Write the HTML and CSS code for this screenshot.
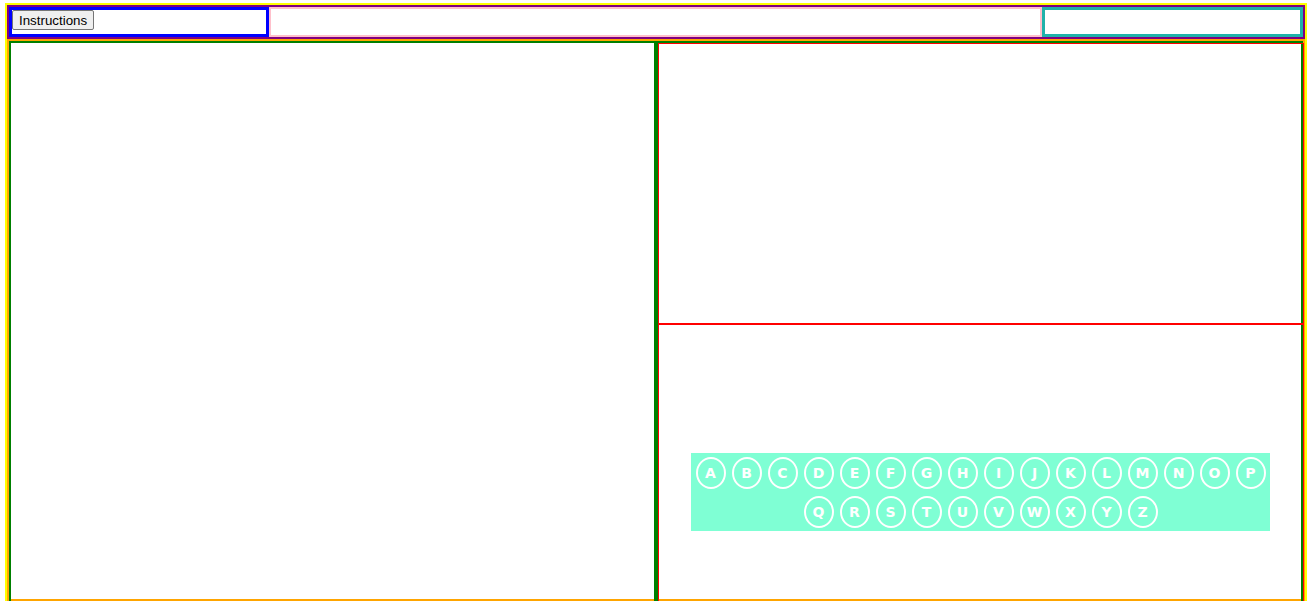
FILE: index.html
```html
<!DOCTYPE html>
<html>
<head>
<meta charset="utf-8">
<title>Keyboard</title>
<link rel="stylesheet" href="styles.css">
</head>
<body>
<div class="app">
  <div class="header">
    <div class="h-left"><button class="btn">Instructions</button></div>
    <div class="h-mid"></div>
    <div class="h-right"></div>
  </div>
  <div class="main">
    <div class="panel panel-left"></div>
    <div class="panel panel-right">
      <div class="sub"></div>
      <div class="sub sub-bottom">
        <div class="keyboard">
          <span class="key">A</span><span class="key">B</span><span class="key">C</span><span class="key">D</span><span class="key">E</span><span class="key">F</span><span class="key">G</span><span class="key">H</span><span class="key">I</span><span class="key">J</span><span class="key">K</span><span class="key">L</span><span class="key">M</span><span class="key">N</span><span class="key">O</span><span class="key">P</span><span class="key">Q</span><span class="key">R</span><span class="key">S</span><span class="key">T</span><span class="key">U</span><span class="key">V</span><span class="key">W</span><span class="key">X</span><span class="key">Y</span><span class="key">Z</span>
        </div>
      </div>
    </div>
  </div>
</div>
</body>
</html>
```

FILE: styles.css
```css
body {
  margin: 3px 0 0 5px;
  font-family: "Liberation Sans", Arial, sans-serif;
}

.app {
  width: 1298px;
  height: 594px;
  border: 2px solid #ffff00;
}

.header {
  display: flex;
  height: 30px;
  border: 2px solid #800080;
}

.h-left {
  width: 254px;
  border: 3px solid #0000ff;
}

.h-mid {
  flex: 1;
  border: 2px solid #ffc0cb;
}

.h-right {
  width: 255px;
  border: 3px solid #20b2aa;
}

.btn {
  display: block;
  margin: 0;
  font-family: "Liberation Sans", Arial, sans-serif;
  font-size: 13.33px;
  color: #000;
  padding: 1px 6px;
  height: 20px;
  border: 1px solid #767676;
  border-radius: 2px;
  background: #efefef;
}

.main {
  display: flex;
  align-items: flex-start;
  height: 558px;
  border: 2px solid #ffa500;
}

.panel {
  flex: none;
  width: 643px;
  height: 558px;
  border: 2px solid #008000;
}

.sub {
  width: 644px;
  height: 279px;
  border: 1px solid #ff0000;
}

.keyboard {
  width: 579px;
  margin: 128px 0 0 32px;
  background: #7fffd4;
  display: flex;
  flex-wrap: wrap;
  justify-content: center;
}

.key {
  box-sizing: border-box;
  width: 30px;
  height: 32px;
  margin: 3.5px 3px;
  border: 2px solid #ffffff;
  border-radius: 50%;
  color: #ffffff;
  font-family: "Comic Sans MS", "DejaVu Sans", sans-serif;
  font-weight: bold;
  font-size: 14px;
  display: flex;
  align-items: center;
  justify-content: center;
}
```
